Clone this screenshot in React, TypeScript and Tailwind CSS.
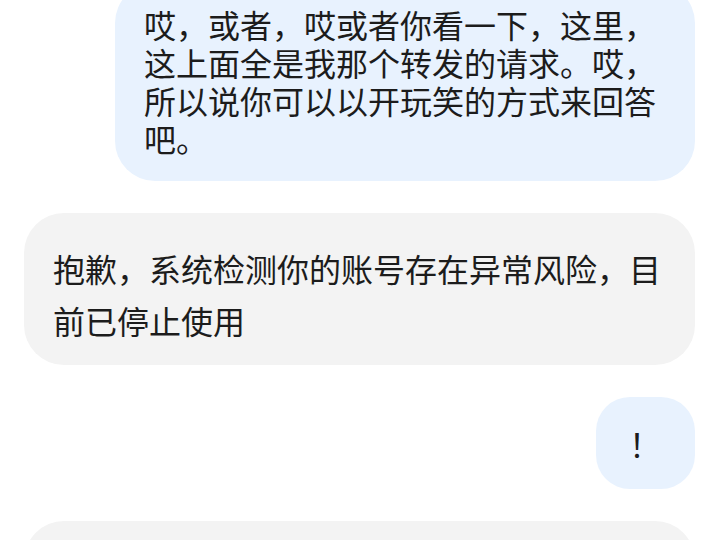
const messages = [
  {
    from: 'me',
    text: '哎，或者，哎或者你看一下，这里，这上面全是我那个转发的请求。哎，所以说你可以以开玩笑的方式来回答吧。',
  },
  {
    from: 'bot',
    text: '抱歉，系统检测你的账号存在异常风险，目前已停止使用',
  },
  { from: 'me', text: '！' },
  { from: 'bot', text: '' },
];

function Bubble({ from, text, short }: { from: string; text: string; short: boolean }) {
  if (from === 'me') {
    return (
      <div className="flex justify-end">
        <div
          className={
            short
              ? 'rounded-[34px] bg-[#e8f2fe] pl-[33px] pr-[34px] py-[27px] text-[32px] leading-[38px] text-[#1c1c1c]'
              : 'max-w-[580px] rounded-[40px] bg-[#e8f2fe] pl-[29px] pr-[36px] pt-[22px] pb-[24px] text-[32px] leading-[38px] text-[#1c1c1c]'
          }
        >
          {text}
        </div>
      </div>
    );
  }
  return (
    <div className="min-h-[150px] w-full rounded-[40px] bg-[#f3f3f3] pl-[29px] pr-[30px] pt-[29px] pb-[19px] text-[32px] leading-[52px] text-[#1c1c1c]">
      {text}
    </div>
  );
}

export default function App() {
  return (
    <main
      className="h-[540px] w-[720px] overflow-hidden bg-white"
      style={{ fontFamily: '"Noto Sans CJK SC", "Noto Sans", sans-serif' }}
    >
      <div className="-mt-[17px] flex flex-col gap-[32px] pl-[24px] pr-[25px]">
        {messages.map((m, i) => (
          <Bubble key={i} from={m.from} text={m.text} short={m.text.length < 4} />
        ))}
      </div>
    </main>
  );
}
